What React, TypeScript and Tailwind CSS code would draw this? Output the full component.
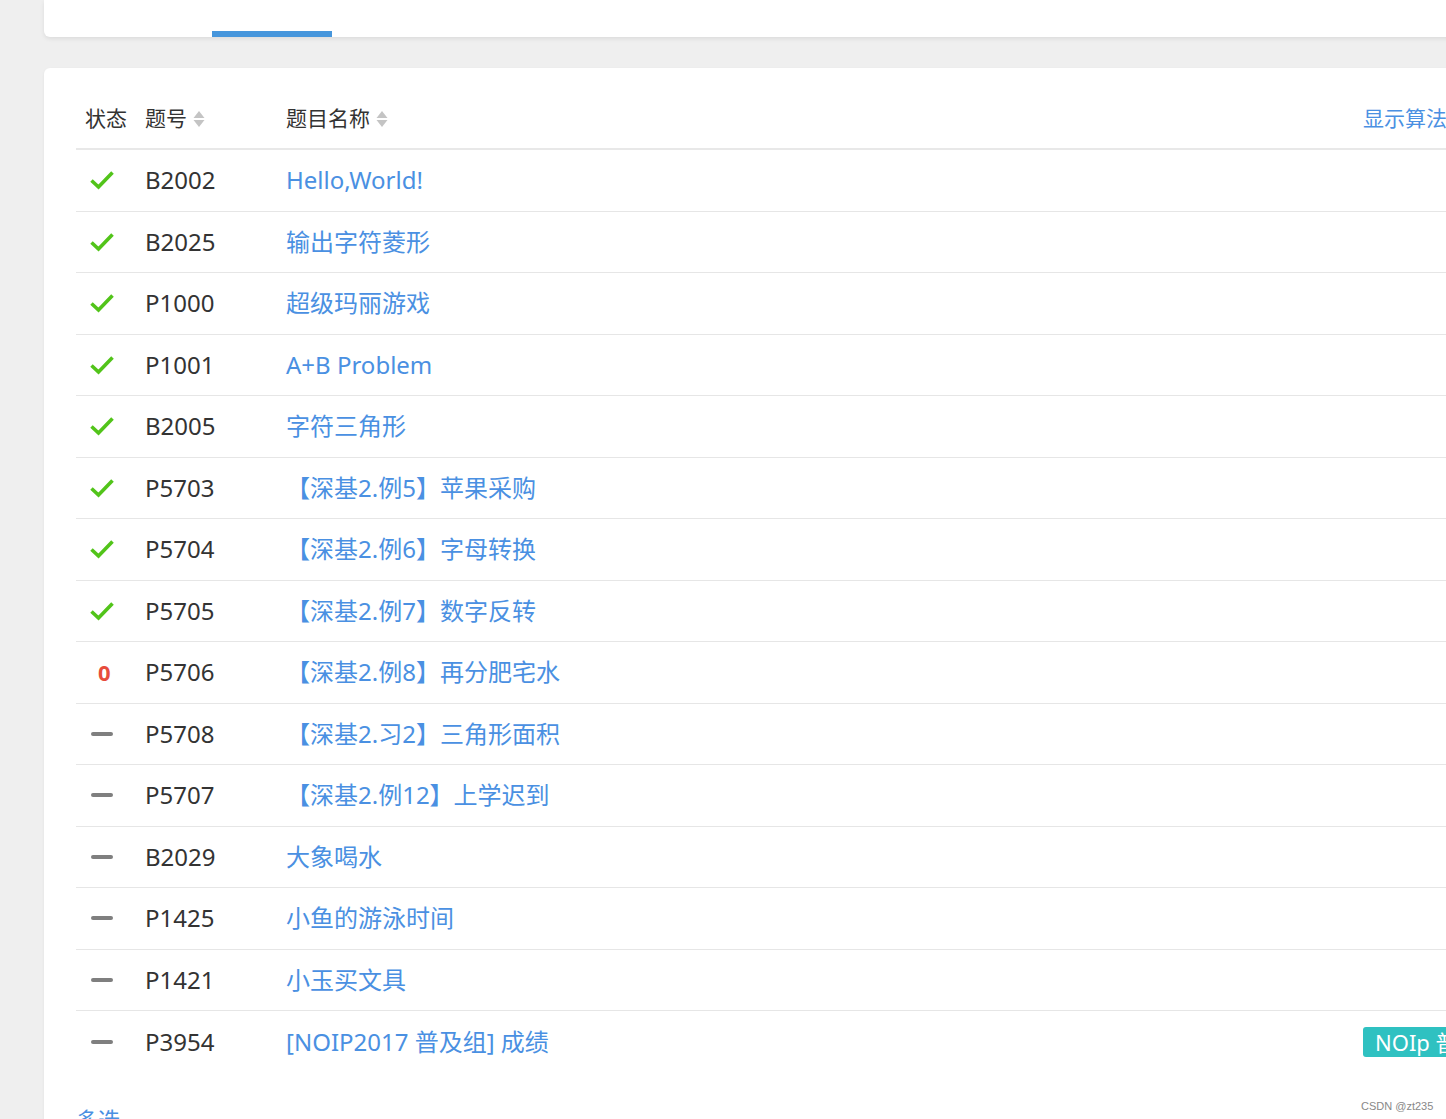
import React from "react";

type Row = { s: "ok" | "zero" | "none"; id: string; title: string; badge?: string };

const rows: Row[] = [
  { s: "ok", id: "B2002", title: "Hello,World!" },
  { s: "ok", id: "B2025", title: "输出字符菱形" },
  { s: "ok", id: "P1000", title: "超级玛丽游戏" },
  { s: "ok", id: "P1001", title: "A+B Problem" },
  { s: "ok", id: "B2005", title: "字符三角形" },
  { s: "ok", id: "P5703", title: "【深基2.例5】苹果采购" },
  { s: "ok", id: "P5704", title: "【深基2.例6】字母转换" },
  { s: "ok", id: "P5705", title: "【深基2.例7】数字反转" },
  { s: "zero", id: "P5706", title: "【深基2.例8】再分肥宅水" },
  { s: "none", id: "P5708", title: "【深基2.习2】三角形面积" },
  { s: "none", id: "P5707", title: "【深基2.例12】上学迟到" },
  { s: "none", id: "B2029", title: "大象喝水" },
  { s: "none", id: "P1425", title: "小鱼的游泳时间" },
  { s: "none", id: "P1421", title: "小玉买文具" },
  { s: "none", id: "P3954", title: "[NOIP2017 普及组] 成绩", badge: "NOIp 普及组" },
];

function Sort() {
  return (
    <svg width="12" height="20" viewBox="0 0 12 20" className="ml-[6px]">
      <path d="M6 2 L11.5 9 L0.5 9 Z" fill="#c4c4c4" />
      <path d="M6 18 L11.5 11 L0.5 11 Z" fill="#c4c4c4" />
    </svg>
  );
}

function Status({ s }: { s: Row["s"] }) {
  if (s === "ok")
    return (
      <svg width="26" height="22" viewBox="0 0 26 22" className="ml-[13px]">
        <path d="M2.5 11.5 L9.5 18 L23.5 3.5" fill="none" stroke="#52c41a" strokeWidth="3.6" strokeLinecap="butt" strokeLinejoin="miter" />
      </svg>
    );
  if (s === "zero")
    return <span className="ml-[22px] text-[22px] font-bold text-[#e74c3c]">0</span>;
  return <span className="ml-[15px] block w-[22px] h-[4px] rounded-[2px] bg-[#7f7f7f]" />;
}

export default function App() {
  return (
    <div
      className="relative w-[1446px] h-[1119px] overflow-hidden bg-[#efefef]"
      style={{ fontFamily: '"Noto Sans", "Noto Sans CJK SC", sans-serif' }}
    >
      <div className="ml-[44px] w-[1460px] h-[37px] bg-white rounded-b-[6px] shadow-[0_2px_4px_rgba(0,0,0,0.08)] relative">
        <div className="absolute left-[168px] bottom-0 w-[120px] h-[6px] bg-[#4696dc]" />
      </div>
      <div className="ml-[44px] mt-[31px] w-[1460px] bg-white rounded-[6px] shadow-[0_1px_3px_rgba(0,0,0,0.06)] pt-[22px] pl-[32px] h-[1100px]">
        <div className="grid grid-cols-[69px_141px_1fr_141px] items-center h-[60px] border-b-[2px] border-[#e8e8e8] text-[21px] text-[#333]">
          <div className="pl-[9px]">状态</div>
          <div className="flex items-center">题号<Sort /></div>
          <div className="flex items-center">题目名称<Sort /></div>
          <div className="whitespace-nowrap text-[#4a90e2]">显示算法标签</div>
        </div>
        {rows.map((r, i) => (
          <div
            key={r.id}
            className={`grid grid-cols-[69px_141px_1fr_141px] items-center h-[61.5px] ${i < rows.length - 1 ? "border-b border-[#e6e6e6]" : ""} text-[24px]`}
          >
            <div className="flex items-center"><Status s={r.s} /></div>
            <div className="text-[#333]">{r.id}</div>
            <div className="text-[#4a90e2] whitespace-nowrap">{r.title}</div>
            <div className="whitespace-nowrap">
              {r.badge && (
                <span className="inline-block whitespace-nowrap bg-[#2fc1c1] text-white text-[22px] leading-[30px] px-[12px] rounded-[3px]">
                  {r.badge}
                </span>
              )}
            </div>
          </div>
        ))}
        <div className="mt-[30px] text-[22px] text-[#4a90e2]">多选</div>
      </div>
      <div className="absolute left-[1361px] top-[1098px] text-[11px] text-[#888]" style={{ fontFamily: '"Liberation Sans", sans-serif' }}>
        CSDN @zt235
      </div>
    </div>
  );
}
